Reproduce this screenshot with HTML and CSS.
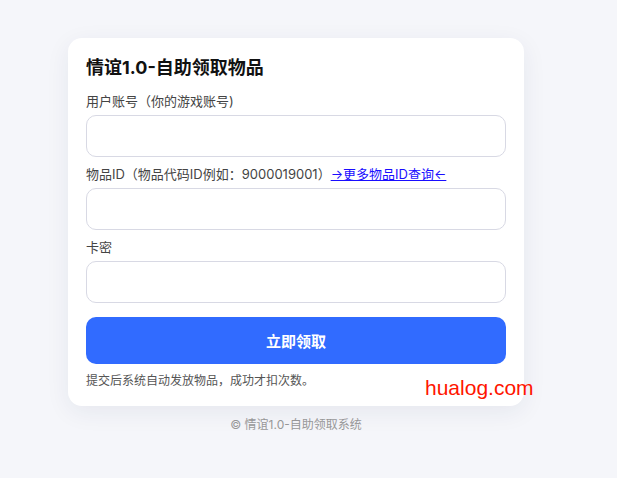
FILE: index.html
```html
<!DOCTYPE html>
<html lang="zh-CN">
<head>
<meta charset="utf-8">
<title>情谊1.0-自助领取物品</title>
<link rel="stylesheet" href="styles.css">
</head>
<body>
<main class="page">
  <form class="card">
    <h1 class="title">情谊1.0-自助领取物品</h1>
    <div class="field">
      <label class="label">用户账号（你的游戏账号)</label>
      <input class="input" type="text">
    </div>
    <div class="field">
      <label class="label">物品ID（物品代码ID例如：9000019001）<a class="link" href="#">→更多物品ID查询←</a></label>
      <input class="input" type="text">
    </div>
    <div class="field">
      <label class="label">卡密</label>
      <input class="input" type="text">
    </div>
    <button class="btn" type="button">立即领取</button>
    <p class="hint">提交后系统自动发放物品，成功才扣次数。</p>
    <span class="watermark">hualog.com</span>
  </form>
  <footer class="footer">© 情谊1.0-自助领取系统</footer>
</main>
</body>
</html>
```

FILE: styles.css
```css
html, body {
  margin: 0;
  padding: 0;
  background: #f5f6fa;
  font-family: "Inter", "Noto Sans CJK SC", sans-serif;
}
.page {
  display: flex;
  flex-direction: column;
  align-items: center;
  padding-top: 38px;
  padding-right: 25px;
  box-sizing: border-box;
}
.card {
  position: relative;
  width: 456px;
  box-sizing: border-box;
  background: #fff;
  border-radius: 14px;
  padding: 18px 18px 16px;
  box-shadow: 0 6px 24px rgba(30, 40, 80, 0.07);
}
.title {
  margin: 0 0 11px;
  font-size: 18px;
  line-height: 24px;
  font-weight: 700;
  color: #111;
}
.field {
  margin-bottom: 7px;
}
.label {
  display: block;
  font-size: 13px;
  line-height: 20px;
  color: #444;
  margin-bottom: 4px;
}
.link {
  color: #1a0dff;
  text-decoration: underline;
}
.input {
  display: block;
  width: 100%;
  height: 42px;
  box-sizing: border-box;
  border: 1px solid #d8d9e4;
  border-radius: 10px;
  background: #fff;
  outline: none;
}
.btn {
  display: block;
  width: 100%;
  height: 47px;
  margin-top: 14px;
  border: none;
  border-radius: 10px;
  background: #316bff;
  color: #fff;
  font-family: inherit;
  font-size: 15px;
  font-weight: 700;
}
.hint {
  margin: 8px 0 0;
  font-size: 12px;
  line-height: 18px;
  color: #555;
}
.watermark {
  position: absolute;
  left: 357px;
  top: 339px;
  font-family: "Liberation Sans", Arial, sans-serif;
  font-size: 21px;
  color: #ff1500;
  line-height: 1;
}
.footer {
  margin-top: 10px;
  font-size: 12px;
  line-height: 18px;
  color: #999;
}
```
